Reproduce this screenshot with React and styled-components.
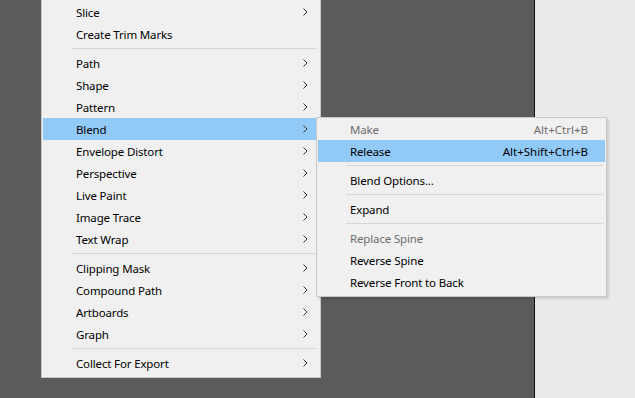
import React from "react";
import styled, { createGlobalStyle } from "styled-components";

const GlobalStyle = createGlobalStyle`
  html, body {
    margin: 0;
    padding: 0;
  }
  body {
    font-family: "Segoe UI", "Noto Sans", "Liberation Sans", sans-serif;
  }
`;

const Page = styled.div`
  position: relative;
  display: flex;
  width: 635px;
  height: 398px;
  overflow: hidden;
  background: #5b5b5b;
`;

const Canvas = styled.div`
  width: 534px;
  padding-left: 41px;
  box-sizing: border-box;
`;

const Divider = styled.div`
  width: 1px;
  background: #111;
`;

const Panel = styled.div`
  flex: 1;
  background: #e9ebea;
`;

const Menu = styled.div`
  box-sizing: border-box;
  width: ${(p) => p.width}px;
  padding: ${(p) => p.pad};
  background: #f0f0f0;
  border: 1px solid #c8c8c8;
  border-top: ${(p) => (p.sub ? "1px solid #c8c8c8" : "none")};
  font-size: 11.5px;
  letter-spacing: -0.15px;
`;

const SubMenu = styled(Menu)`
  position: absolute;
  left: 316px;
  top: 117px;
  box-shadow: 2px 2px 2px rgba(0, 0, 0, 0.12);
`;

const Row = styled.div`
  display: flex;
  align-items: center;
  height: 22px;
  margin: 0 1px;
  padding-left: ${(p) => p.indent}px;
  padding-right: ${(p) => p.right}px;
  background: ${(p) => (p.active ? "#91c9f7" : "transparent")};
  color: ${(p) => (p.disabled ? "#6d6d6d" : "#000")};
  white-space: nowrap;
`;

const Label = styled.span`
  flex: 1;
`;

const Shortcut = styled.span`
  letter-spacing: 0;
`;

const Sep = styled.div`
  height: 1px;
  margin: 3px 3px 3px ${(p) => p.indent}px;
  background: #d7d7d7;
`;

const Chevron = () => (
  <svg width="5" height="8" viewBox="0 0 5 8">
    <path d="M0.5 0.5 L4 4 L0.5 7.5" fill="none" stroke="#333" strokeWidth="1" />
  </svg>
);

const mainItems = [
  { label: "Slice", sub: true },
  { label: "Create Trim Marks" },
  "-",
  { label: "Path", sub: true },
  { label: "Shape", sub: true },
  { label: "Pattern", sub: true },
  { label: "Blend", sub: true, active: true },
  { label: "Envelope Distort", sub: true },
  { label: "Perspective", sub: true },
  { label: "Live Paint", sub: true },
  { label: "Image Trace", sub: true },
  { label: "Text Wrap", sub: true },
  "-",
  { label: "Clipping Mask", sub: true },
  { label: "Compound Path", sub: true },
  { label: "Artboards", sub: true },
  { label: "Graph", sub: true },
  "-",
  { label: "Collect For Export", sub: true },
];

const blendItems = [
  { label: "Make", key: "Alt+Ctrl+B", disabled: true },
  { label: "Release", key: "Alt+Shift+Ctrl+B", active: true },
  "-",
  { label: "Blend Options..." },
  "-",
  { label: "Expand" },
  "-",
  { label: "Replace Spine", disabled: true },
  { label: "Reverse Spine" },
  { label: "Reverse Front to Back" },
];

const App = () => (
  <>
    <GlobalStyle />
    <Page>
      <Canvas>
        <Menu width={280} pad="1px 0 3px">
          {mainItems.map((it, i) =>
            it === "-" ? (
              <Sep key={i} indent={30} />
            ) : (
              <Row key={i} indent={33} right={11} active={it.active}>
                <Label>{it.label}</Label>
                {it.sub && <Chevron />}
              </Row>
            )
          )}
        </Menu>
      </Canvas>
      <Divider />
      <Panel />
      <SubMenu sub width={291} pad="0 0 3px">
        {blendItems.map((it, i) =>
          it === "-" ? (
            <Sep key={i} indent={29} />
          ) : (
            <Row
              key={i}
              indent={32}
              right={17}
              active={it.active}
              disabled={it.disabled}
            >
              <Label>{it.label}</Label>
              {it.key && <Shortcut>{it.key}</Shortcut>}
            </Row>
          )
        )}
      </SubMenu>
    </Page>
  </>
);

export default App;
